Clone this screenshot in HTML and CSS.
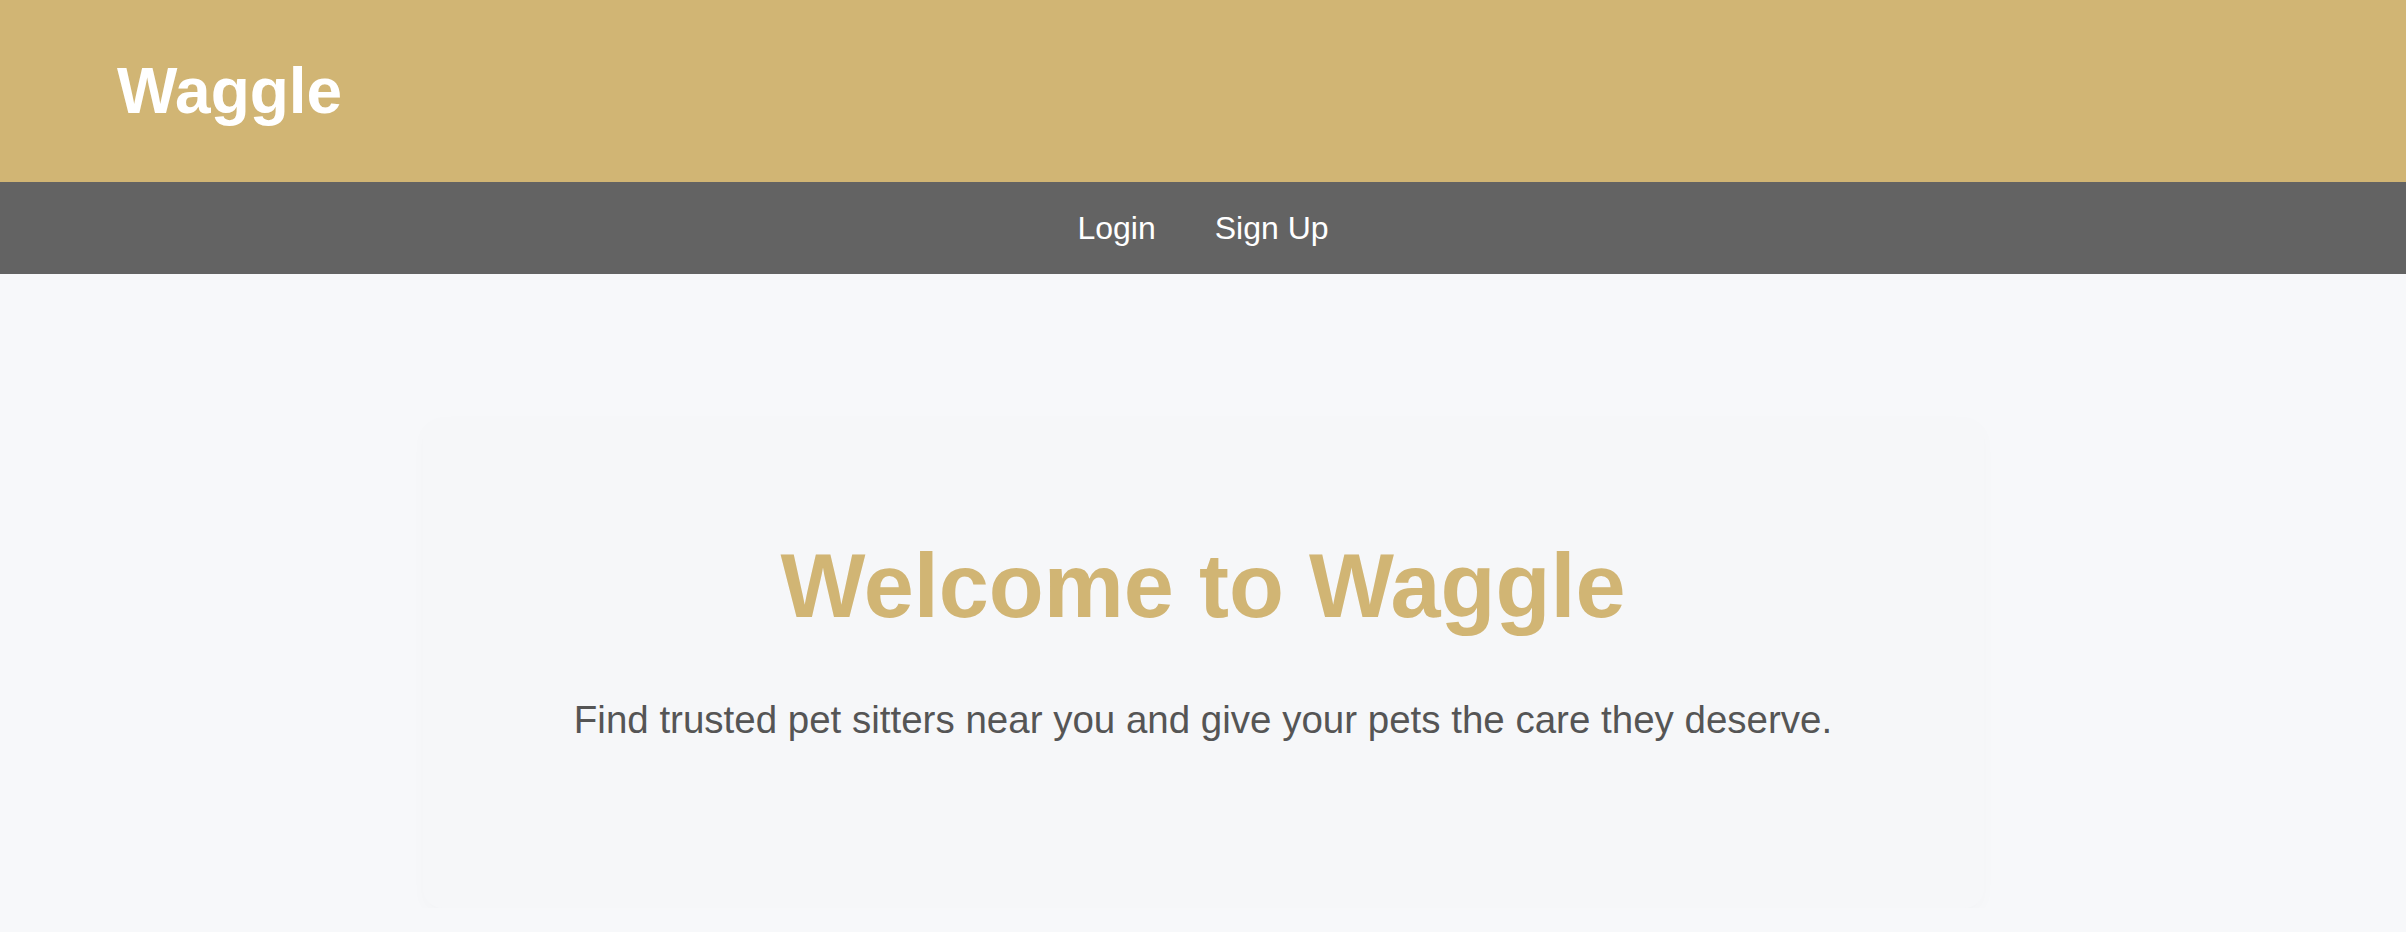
FILE: index.html
```html
<!DOCTYPE html>
<html lang="en">
<head>
<meta charset="utf-8">
<title>Waggle</title>
<link rel="stylesheet" href="styles.css">
</head>
<body>
<header class="site-header">
  <div class="logo">Waggle</div>
</header>
<nav class="site-nav">
  <a class="nav-link" href="#">Login</a>
  <a class="nav-link" href="#">Sign Up</a>
</nav>
<main class="main">
  <section class="hero">
    <h1 class="hero-title">Welcome to Waggle</h1>
    <p class="hero-text">Find trusted pet sitters near you and give your pets the care they deserve.</p>
  </section>
</main>
</body>
</html>
```

FILE: styles.css
```css
* { box-sizing: border-box; }
html, body { margin: 0; padding: 0; }
body {
  font-family: "Liberation Sans", Arial, Helvetica, sans-serif;
  background: #f7f8fa;
  color: #555;
}
.site-header {
  height: 182px;
  background: #d1b574;
  display: flex;
  align-items: center;
  padding-left: 117px;
}
.logo {
  color: #fff;
  font-weight: 700;
  font-size: 64px;
  line-height: 1;
}
.site-nav {
  height: 92px;
  background: #636363;
  display: flex;
  align-items: center;
  justify-content: center;
  gap: 59px;
}
.nav-link {
  color: #fff;
  text-decoration: none;
  font-size: 32px;
}
.main {
  padding-top: 143px;
  display: flex;
  justify-content: center;
}
.hero {
  width: 1561px;
  background: #f6f7f9;
  border-radius: 20px;
  box-shadow: 0 6px 16px rgba(0, 0, 0, 0.02);
  padding: 118px 40px 166px;
  text-align: center;
}
.hero-title {
  margin: 0;
  font-size: 90px;
  font-weight: 700;
  color: #d1b574;
  line-height: normal;
}
.hero-text {
  margin: 60px 0 0;
  font-size: 38.5px;
  line-height: normal;
  color: #555;
}
```
